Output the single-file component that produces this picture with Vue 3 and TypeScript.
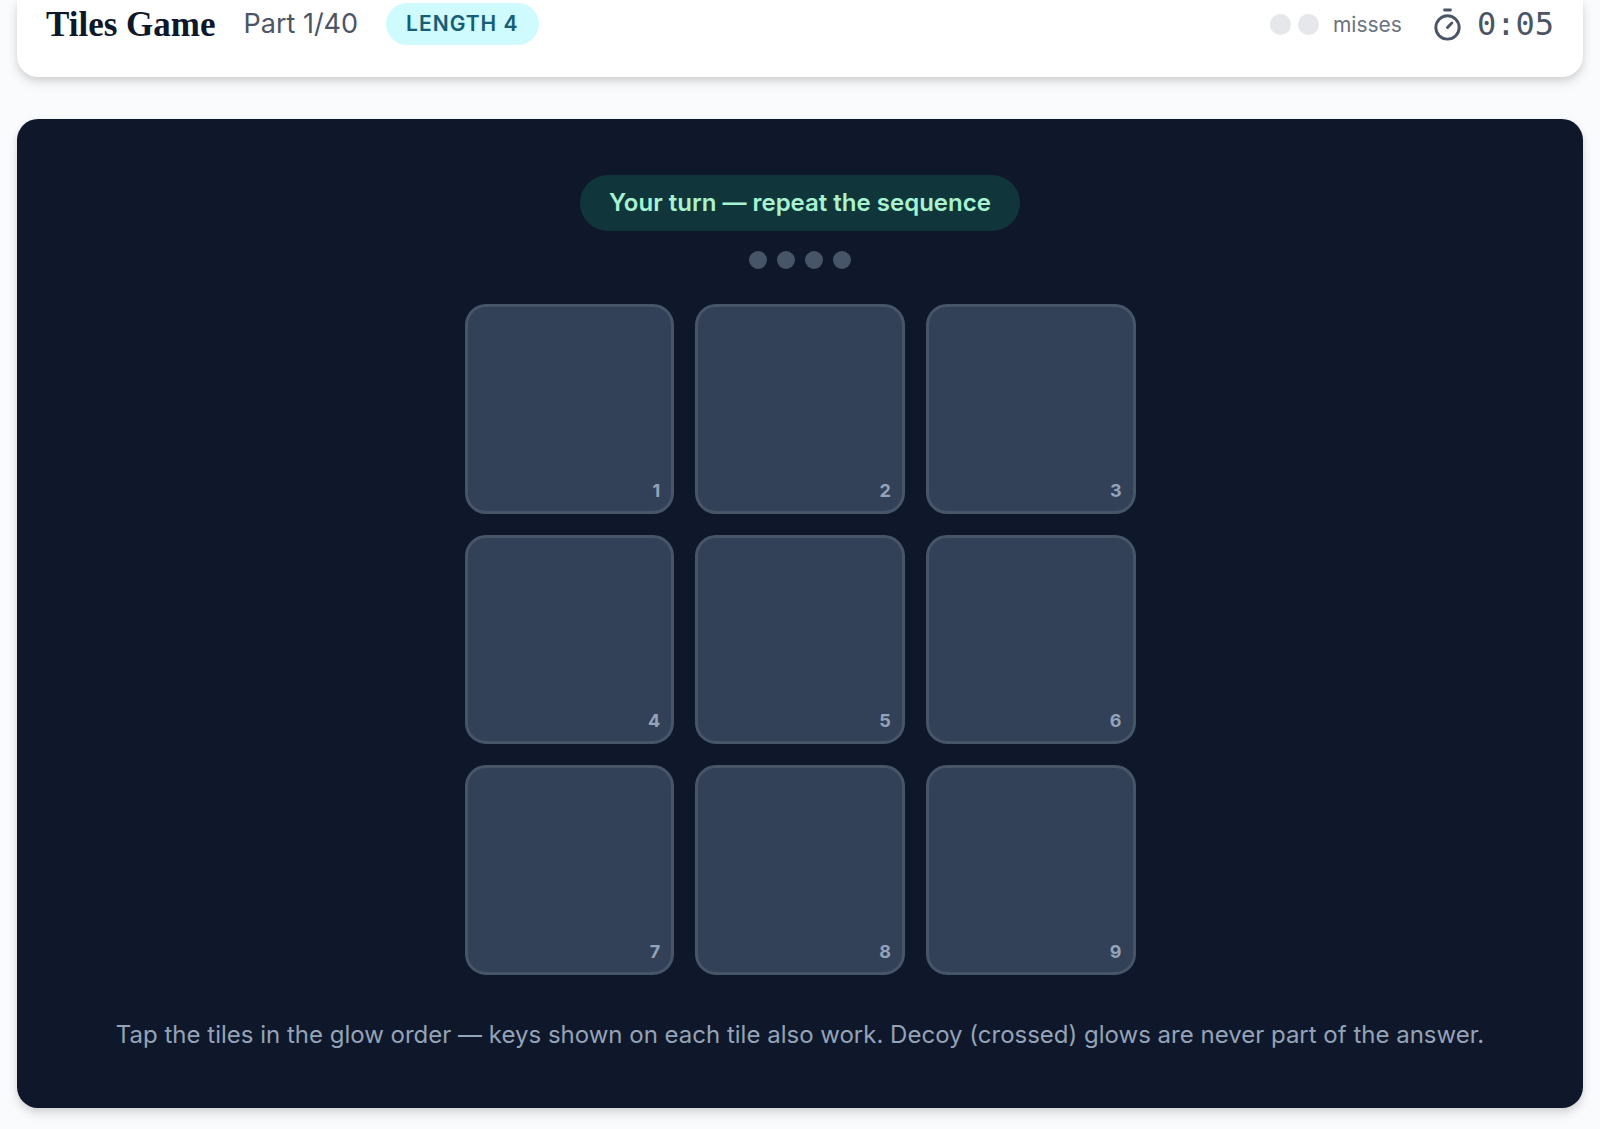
<script setup lang="ts">
import { computed, ref } from 'vue'

const part = ref(1)
const totalParts = 40
const sequenceLength = 4
const maxMisses = 2
const misses = ref(0)
const seconds = ref(5)
const entered = ref<number[]>([])
const tiles = Array.from({ length: 9 }, (_, i) => i + 1)

const clock = computed(
  () => `${Math.floor(seconds.value / 60)}:${String(seconds.value % 60).padStart(2, '0')}`
)

function press(tile: number) {
  if (entered.value.length < sequenceLength) entered.value.push(tile)
}
</script>

<template>
  <div class="page">
    <header class="topbar">
      <div class="group">
        <h1 class="title">Tiles Game</h1>
        <span class="part">Part {{ part }}/{{ totalParts }}</span>
        <span class="length">LENGTH {{ sequenceLength }}</span>
      </div>
      <div class="group">
        <div class="misses">
          <span class="miss-dots">
            <i v-for="n in maxMisses" :key="n" class="miss" :class="{ used: n <= misses }"></i>
          </span>
          <span>misses</span>
        </div>
        <div class="timer">
          <svg class="timer-icon" viewBox="0 0 24 24" aria-hidden="true">
            <line x1="10" y1="2" x2="14" y2="2" />
            <line x1="12" y1="14" x2="15" y2="11" />
            <circle cx="12" cy="14" r="8" />
          </svg>
          <time>{{ clock }}</time>
        </div>
      </div>
    </header>

    <main class="board">
      <p class="status" role="status">Your turn — repeat the sequence</p>
      <div class="progress">
        <i v-for="n in sequenceLength" :key="n" class="step" :class="{ done: n <= entered.length }"></i>
      </div>
      <div class="grid">
        <button v-for="tile in tiles" :key="tile" type="button" class="tile" @click="press(tile)">
          {{ tile }}
        </button>
      </div>
      <p class="hint">
        Tap the tiles in the glow order — keys shown on each tile also work. Decoy (crossed) glows are
        never part of the answer.
      </p>
    </main>
  </div>
</template>

<style>
body {
  margin: 0;
  background: #f9fbfd;
}
</style>

<style scoped>
.page {
  padding: 0 17px 21px;
  font-family: Inter, "Liberation Sans", sans-serif;
}

.topbar {
  display: flex;
  align-items: flex-start;
  justify-content: space-between;
  box-sizing: border-box;
  padding: 3px 29px 32px;
  border-radius: 0 0 21px 21px;
  background: #fff;
  box-shadow: 0 6px 12px rgba(0, 0, 0, 0.1), 0 3px 6px rgba(0, 0, 0, 0.08);
}

.group {
  display: flex;
  align-items: center;
  gap: 28px;
  height: 42px;
}

.title {
  margin: 0;
  padding-top: 2px;
  font-family: "Liberation Serif", serif;
  font-size: 35px;
  line-height: 42px;
  font-weight: 700;
  color: #0f172a;
}

.part {
  font-size: 27px;
  line-height: 42px;
  color: #4b5563;
}

.length {
  padding: 0 20px;
  border-radius: 21px;
  background: #cffafe;
  color: #155e75;
  font-size: 21px;
  line-height: 42px;
  font-weight: 600;
  letter-spacing: 1px;
}

.misses {
  display: flex;
  align-items: center;
  gap: 14px;
  font-size: 21px;
  color: #6b7280;
}

.miss-dots {
  display: flex;
  gap: 7px;
}

.miss {
  width: 21px;
  height: 21px;
  border-radius: 50%;
  background: #e5e7eb;
}

.miss.used {
  background: #f43f5e;
}

.timer {
  display: flex;
  align-items: center;
  gap: 12px;
  font-family: "DejaVu Sans Mono", monospace;
  font-size: 32px;
  line-height: 42px;
  color: #4b5563;
}

.timer-icon {
  width: 35px;
  height: 35px;
  fill: none;
  stroke: currentColor;
  stroke-width: 2;
  stroke-linecap: round;
  stroke-linejoin: round;
}

.board {
  display: flex;
  flex-direction: column;
  align-items: center;
  margin-top: 42px;
  padding: 56px 28px;
  border-radius: 21px;
  background: #0f172a;
  box-shadow: 0 6px 12px rgba(0, 0, 0, 0.1), 0 3px 6px rgba(0, 0, 0, 0.08);
}

.status {
  margin: 0;
  padding: 0 29px;
  border-radius: 28px;
  background: #10363b;
  color: #a7f3d0;
  font-size: 24px;
  line-height: 56px;
  font-weight: 600;
}

.progress {
  display: flex;
  gap: 10px;
  margin-top: 20px;
}

.step {
  width: 18px;
  height: 18px;
  border-radius: 50%;
  background: #475569;
}

.step.done {
  background: #34d399;
}

.grid {
  display: grid;
  grid-template-columns: repeat(3, 1fr);
  gap: 21px;
  width: 100%;
  max-width: 671px;
  margin-top: 35px;
}

.tile {
  display: flex;
  align-items: flex-end;
  justify-content: flex-end;
  aspect-ratio: 1;
  box-sizing: border-box;
  margin: 0;
  padding: 10px 11px;
  border: 3px solid #475569;
  border-radius: 21px;
  background: #334158;
  color: #94a3b8;
  font-family: inherit;
  font-size: 18px;
  line-height: 21px;
  font-weight: 700;
  cursor: pointer;
}

.hint {
  margin: 42px 0 0;
  color: #94a3b8;
  font-size: 24px;
  line-height: 35px;
  text-align: center;
}
</style>
